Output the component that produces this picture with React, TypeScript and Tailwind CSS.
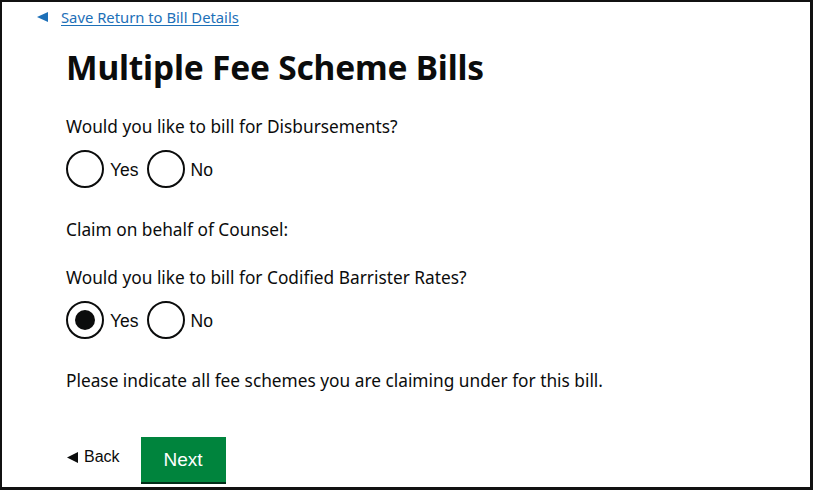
import React from "react";

const Radio = ({ checked }: { checked?: boolean }) => (
  <span className="flex h-[38px] w-[38px] items-center justify-center rounded-full border-2 border-[#0b0c0c] bg-white">
    {checked && <span className="h-[20px] w-[20px] rounded-full bg-[#0b0c0c]" />}
  </span>
);

const RadioRow = ({ yes }: { yes?: boolean }) => (
  <div className="flex items-center h-[38px] font-['Liberation_Sans',Arial,sans-serif] text-[17.5px] text-[#0b0c0c]">
    <Radio checked={yes} />
    <span className="ml-[6px] mr-[8px] pt-[2px]">Yes</span>
    <Radio />
    <span className="ml-[6px] pt-[2px]">No</span>
  </div>
);

export default function App() {
  return (
    <div className="w-[813px] h-[490px] bg-white border-t-2 border-l-2 border-r-[3px] border-b-[3px] border-[#111] overflow-hidden font-['Noto_Sans',sans-serif] text-[#0b0c0c]">
      <div className="h-[30px] flex items-center pl-[35px]">
        <svg width="11" height="10" viewBox="0 0 11 10" className="block">
          <polygon points="0,5 11,0 11,10" fill="#1d70b8" />
        </svg>
        <a className="ml-[13px] text-[14.8px] text-[#1d70b8] underline underline-offset-2 cursor-pointer">
          Save Return to Bill Details
        </a>
      </div>
      <div className="pl-[64px]">
        <h1 className="mt-[15px] text-[33.5px] leading-[40px] font-bold tracking-[-0.2px]">Multiple Fee Scheme Bills</h1>
        <p className="mt-[28px] text-[17.3px] leading-[24px]">Would you like to bill for Disbursements?</p>
        <div className="mt-[11px]">
          <RadioRow />
        </div>
        <p className="mt-[30px] text-[17.3px] leading-[24px]">Claim on behalf of Counsel:</p>
        <p className="mt-[24px] text-[17.3px] leading-[24px]">Would you like to bill for Codified Barrister Rates?</p>
        <div className="mt-[11px]">
          <RadioRow yes />
        </div>
        <p className="mt-[30px] text-[17.3px] leading-[24px]">Please indicate all fee schemes you are claiming under for this bill.</p>
        <div className="mt-[44px] flex items-start font-['Liberation_Sans',Arial,sans-serif]">
          <div className="mt-[10px] flex items-center h-[20px] text-[16px]">
            <svg width="11" height="11" viewBox="0 0 11 11" className="block ml-[1px]">
              <polygon points="0,5.5 11,0 11,11" fill="#0b0c0c" />
            </svg>
            <span className="ml-[6px]">Back</span>
          </div>
          <button className="ml-[21px] w-[85px] h-[45px] bg-[#00843d] text-white text-[19px] shadow-[0_2px_0_#002d18] flex items-center justify-center pt-[1px]">
            Next
          </button>
        </div>
      </div>
    </div>
  );
}
